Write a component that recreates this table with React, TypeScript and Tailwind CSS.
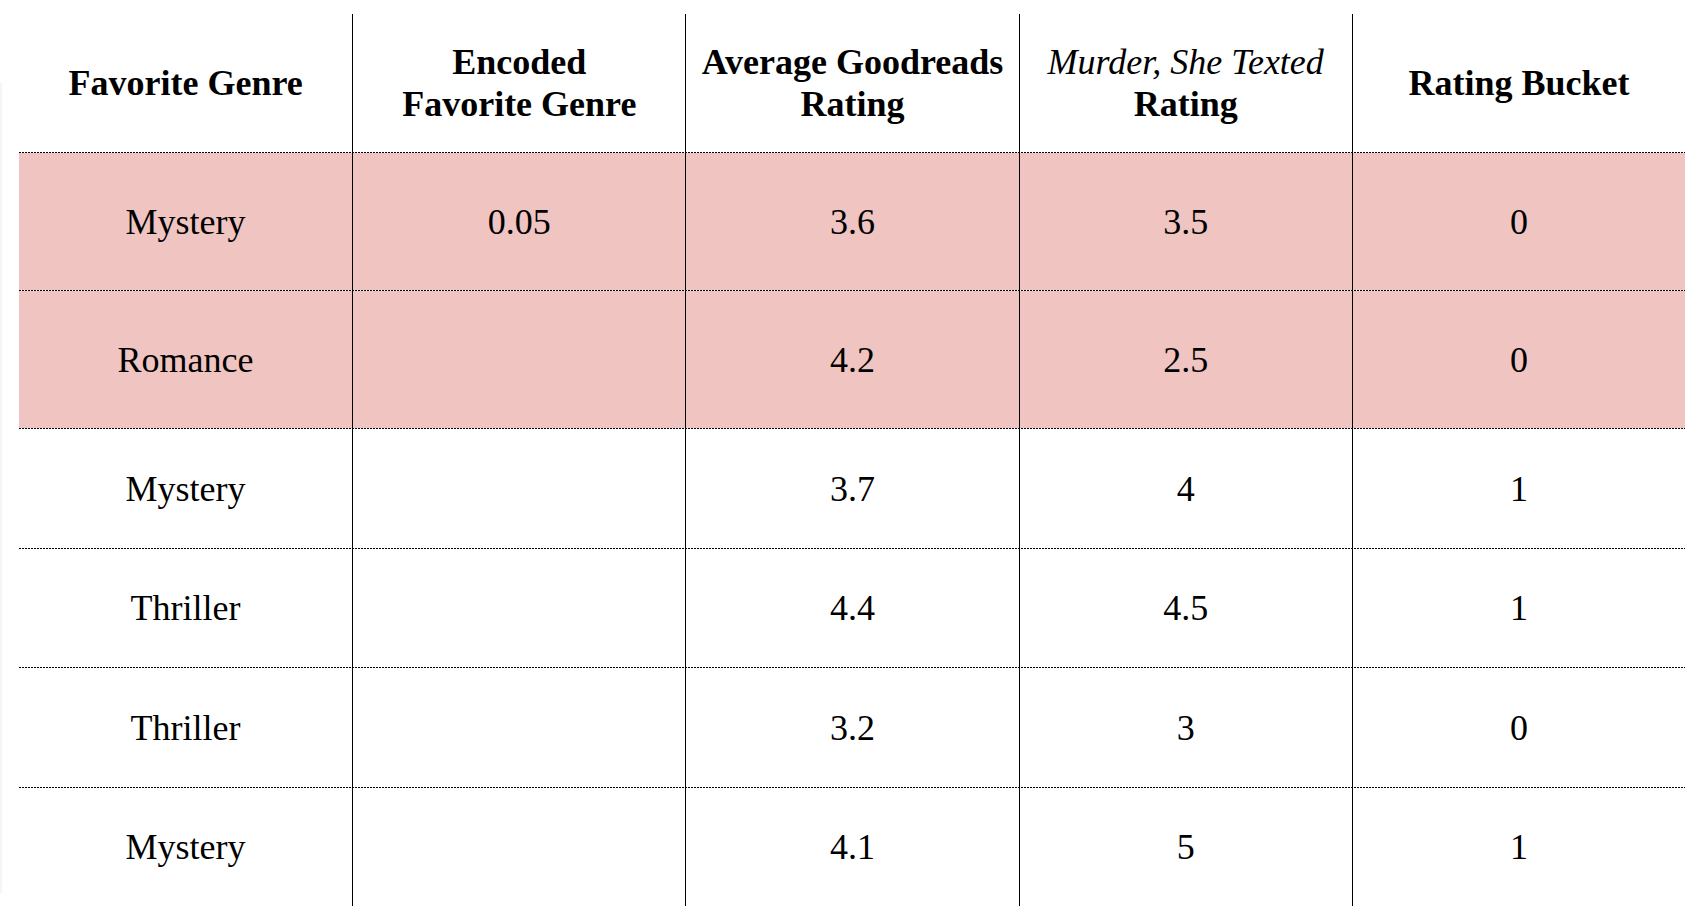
import React from 'react';

type Row = {
  genre: string;
  encoded: string;
  avg: string;
  mst: string;
  bucket: string;
  highlight?: boolean;
  h: string;
};

const rows: Row[] = [
  { genre: 'Mystery', encoded: '0.05', avg: '3.6', mst: '3.5', bucket: '0', highlight: true, h: 'h-[137px]' },
  { genre: 'Romance', encoded: '', avg: '4.2', mst: '2.5', bucket: '0', highlight: true, h: 'h-[137px]' },
  { genre: 'Mystery', encoded: '', avg: '3.7', mst: '4', bucket: '1', h: 'h-[119px]' },
  { genre: 'Thriller', encoded: '', avg: '4.4', mst: '4.5', bucket: '1', h: 'h-[118px]' },
  { genre: 'Thriller', encoded: '', avg: '3.2', mst: '3', bucket: '0', h: 'h-[119px]' },
  { genre: 'Mystery', encoded: '', avg: '4.1', mst: '5', bucket: '1', h: 'h-[118px]' },
];

function Cell({ children, first, bold }: { children?: React.ReactNode; first?: boolean; bold?: boolean }) {
  return (
    <div
      className={
        'flex items-center justify-center text-center text-[36px] leading-[42px] text-black ' +
        (bold ? 'font-bold ' : '') +
        (first ? '' : 'border-l border-black')
      }
    >
      {children}
    </div>
  );
}

// row separator: 2px dot, 1px gap
function Dotted() {
  return <div className="h-px w-full bg-[linear-gradient(to_right,#000_2px,transparent_2px)] bg-[length:3px_1px] bg-repeat-x" />;
}

export default function App() {
  return (
    <div
      className="flex min-h-[922px] w-[1704px] bg-white pt-[14px]"
      style={{ fontFamily: '"Liberation Serif", "Times New Roman", serif' }}
    >
      <div className="mt-[69px] h-[810px] w-[2px] bg-[#f5f5f5]" />
      <div className="ml-[17px] flex w-[1666px] flex-col">
        <div className="grid h-[138px] grid-cols-5">
          <Cell first bold>Favorite Genre</Cell>
          <Cell bold>
            Encoded
            <br />
            Favorite Genre
          </Cell>
          <Cell bold>
            Average Goodreads
            <br />
            Rating
          </Cell>
          <Cell bold>
            <span>
              <span className="font-normal italic">Murder, She Texted</span>
              <br />
              Rating
            </span>
          </Cell>
          <Cell bold>Rating Bucket</Cell>
        </div>
        {rows.map((r, i) => (
          <React.Fragment key={i}>
            <Dotted />
            <div className={'grid grid-cols-5 ' + r.h + (r.highlight ? ' bg-[#efc4c1]' : '')}>
              <Cell first>{r.genre}</Cell>
              <Cell>{r.encoded}</Cell>
              <Cell>{r.avg}</Cell>
              <Cell>{r.mst}</Cell>
              <Cell>{r.bucket}</Cell>
            </div>
          </React.Fragment>
        ))}
      </div>
    </div>
  );
}
